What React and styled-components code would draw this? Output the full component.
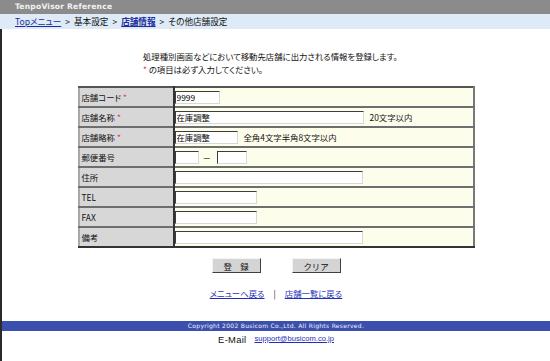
import React from 'react';
import styled, { createGlobalStyle } from 'styled-components';

const GlobalStyle = createGlobalStyle`
    body {
        margin: 0;
        background: #fff;
        font-family: 'Noto Sans CJK JP', sans-serif;
        font-feature-settings: "palt";
    }
`;

const rows = [
    { label: '店舗コード', required: true, inputs: [{ w: 45, value: '9999' }] },
    { label: '店舗名称', required: true, inputs: [{ w: 189, value: '在庫調整' }], note: '20文字以内' },
    { label: '店舗略称', required: true, inputs: [{ w: 63, value: '在庫調整' }], note: '全角4文字半角8文字以内' },
    { label: '郵便番号', zip: true },
    { label: '住所', inputs: [{ w: 188 }] },
    { label: 'TEL', inputs: [{ w: 82 }] },
    { label: 'FAX', inputs: [{ w: 82 }] },
    { label: '備考', inputs: [{ w: 188 }] },
];

const App = () => {
    return (
        <Page>
            <GlobalStyle />
            <TitleBar>TenpoVisor Reference</TitleBar>
            <Breadcrumb>
                <CrumbLink href="#">Topメニュー</CrumbLink>
                <Sep>&gt;</Sep>基本設定<Sep>&gt;</Sep>
                <CrumbLink href="#" strong>店舗情報</CrumbLink>
                <Sep>&gt;</Sep>その他店舗設定
            </Breadcrumb>
            <Main>
                <Intro>
                    <p>処理種別画面などにおいて移動先店舗に出力される情報を登録します。</p>
                    <p><Req>*</Req> の項目は必ず入力してください。</p>
                </Intro>
                <FormTable>
                    <tbody>
                        {rows.map(row => (
                            <tr key={row.label}>
                                <LabelCell>
                                    {row.label}
                                    {row.required && <Req> *</Req>}
                                </LabelCell>
                                <ValueCell>
                                    <FieldRow>
                                        {row.zip ? (
                                            <>
                                                <Field w={24} />
                                                <Dash>－</Dash>
                                                <Field w={30} />
                                            </>
                                        ) : (
                                            row.inputs.map((f, i) => (
                                                <Field key={i} w={f.w} defaultValue={f.value || ''} />
                                            ))
                                        )}
                                        {row.note && <Note>{row.note}</Note>}
                                    </FieldRow>
                                </ValueCell>
                            </tr>
                        ))}
                    </tbody>
                </FormTable>
                <Buttons>
                    <Button>登　録</Button>
                    <Button>クリア</Button>
                </Buttons>
                <Links>
                    <BlueLink href="#">メニューへ戻る</BlueLink>
                    <span>|</span>
                    <BlueLink href="#">店舗一覧に戻る</BlueLink>
                </Links>
                <Footer>Copyright 2002 Busicom Co.,Ltd. All Rights Reserved.</Footer>
                <Mail>
                    <span>E-Mail</span>
                    <MailLink href="#">support@busicom.co.jp</MailLink>
                </Mail>
            </Main>
        </Page>
    );
};

const Page = styled.div`
    width: 550px;
    height: 361px;
    overflow: hidden;
    display: flex;
    flex-direction: column;
`;

const TitleBar = styled.div`
    height: 14px;
    background: #8b8b8b;
    color: #f2f2f2;
    font-family: 'DejaVu Sans', sans-serif;
    font-weight: bold;
    font-size: 7.6px;
    line-height: 14px;
    padding-left: 15px;
    letter-spacing: 0.2px;
`;

const Breadcrumb = styled.div`
    height: 15px;
    background: #deebf7;
    font-size: 8.6px;
    line-height: 15px;
    padding-left: 15px;
    color: #111;
`;

const CrumbLink = styled.a`
    color: #1a2ca0;
    text-decoration: underline;
    font-weight: ${props => props.strong ? 'bold' : 'normal'};
`;

const Sep = styled.span`
    margin: 0 4px;
`;

const Main = styled.div`
    flex: 1;
    border-left: 2px solid #2a2a2a;
    display: flex;
    flex-direction: column;
    align-items: center;
`;

const Intro = styled.div`
    align-self: flex-start;
    margin: 21px 0 0 141px;
    font-size: 8.4px;
    line-height: 13px;
    color: #111;
    p {
        margin: 0;
    }
`;

const Req = styled.span`
    color: #e0405a;
`;

const FormTable = styled.table`
    margin-top: 10px;
    width: 397px;
    border-collapse: collapse;
    border-top: 2px solid #555;
    border-right: 2px solid #777;
    border-bottom: 2px solid #333;
    border-left: 2px solid #a8a8a8;
    font-size: 8.4px;
    color: #111;
    tr + tr td {
        border-top: 2px solid #6e6e6e;
    }
    td {
        height: 18px;
        padding: 0;
    }
`;

const LabelCell = styled.td`
    width: 91px;
    background: #d7d7d7;
    padding-left: 2px !important;
    border-right: 2px solid #333;
`;

const ValueCell = styled.td`
    background: #fdfdec;
`;

const FieldRow = styled.div`
    display: flex;
    align-items: center;
`;

const Field = styled.input`
    box-sizing: border-box;
    width: ${props => props.w}px;
    height: 13px;
    margin: 0;
    padding: 0 1px;
    border-style: solid;
    border-width: 1.5px;
    border-color: #3c3c3c #d8d8d8 #d8d8d8 #3c3c3c;
    background: #fff;
    font-family: 'Noto Sans CJK JP', sans-serif;
    font-size: 8.4px;
    color: #000;
    outline: none;
`;

const Dash = styled.span`
    margin: 0 6px 0 4px;
`;

const Note = styled.span`
    margin-left: 6px;
`;

const Buttons = styled.div`
    margin-top: 10px;
    display: flex;
    gap: 31px;
`;

const Button = styled.button`
    width: 49px;
    height: 15px;
    padding: 0;
    background: #d4d4d4;
    border-style: solid;
    border-width: 1.5px;
    border-color: #f4f4f4 #404040 #404040 #f4f4f4;
    font-family: 'Noto Sans CJK JP', sans-serif;
    font-size: 8.4px;
    color: #111;
`;

const Links = styled.div`
    margin-top: 14px;
    display: flex;
    gap: 9px;
    font-size: 8.4px;
    color: #111;
`;

const BlueLink = styled.a`
    color: #1f2fb8;
    text-decoration: underline;
`;

const Footer = styled.div`
    align-self: stretch;
    margin-top: 22px;
    height: 10px;
    background: #3b4fae;
    color: #f2f2f2;
    font-family: 'DejaVu Sans', sans-serif;
    font-size: 6px;
    line-height: 10px;
    text-align: center;
    letter-spacing: 0.3px;
`;

const Mail = styled.div`
    margin-top: 3px;
    display: flex;
    gap: 8px;
    font-family: 'Liberation Sans', sans-serif;
    font-size: 9.4px;
    color: #111;
    span {
        letter-spacing: 0.3px;
    }
`;

const MailLink = styled.a`
    color: #1f2fb8;
    text-decoration: underline;
    font-size: 7.6px;
    font-family: 'Liberation Sans', sans-serif;
`;

export default App;
